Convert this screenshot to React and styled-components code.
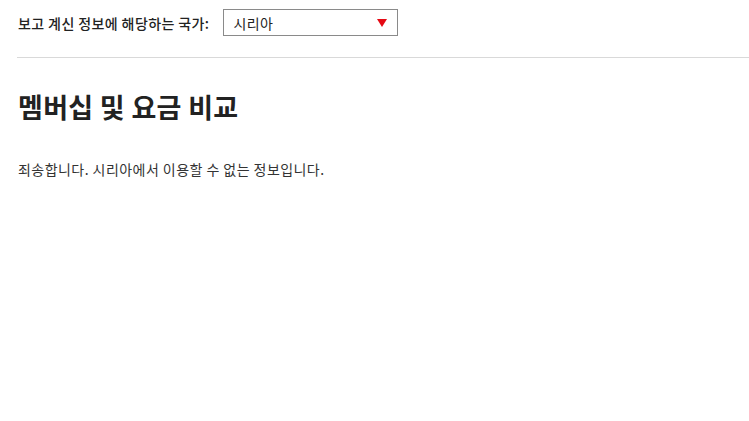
import React from 'react';
import styled, { createGlobalStyle } from 'styled-components';

const GlobalStyle = createGlobalStyle`
  body {
    margin: 0;
    background: #fff;
    font-family: "Noto Sans CJK KR", "Noto Sans", sans-serif;
    color: #222;
  }
`;

const Page = styled.div`
  padding: 9px 0 0 17px;
`;

const CountryBar = styled.div`
  display: flex;
  align-items: center;
  gap: 14px;
  padding-left: 1px;
`;

const Label = styled.label`
  font-size: 14px;
  letter-spacing: 0.4px;
  font-weight: 500;
  color: #222;
`;

const Select = styled.div`
  position: relative;
  width: 164px;
  height: 25px;
  border: 1px solid #8a8a8a;
  display: flex;
  align-items: center;
  padding-left: 9px;
  box-sizing: content-box;
  font-size: 14px;
  letter-spacing: 0.4px;
  color: #222;
`;

const Arrow = styled.span`
  position: absolute;
  right: 10px;
  top: 9px;
  width: 0;
  height: 0;
  border-left: 5px solid transparent;
  border-right: 5px solid transparent;
  border-top: 8px solid #e50914;
`;

const Divider = styled.hr`
  margin: 21px 0 0;
  border: none;
  border-top: 1px solid #d9d9d9;
`;

const Title = styled.h1`
  margin: 29px 0 0 1px;
  font-size: 27px;
  letter-spacing: 0.3px;
  font-weight: 700;
  color: #222;
  line-height: 40px;
`;

const Message = styled.p`
  margin: 32px 0 0 1px;
  font-size: 14px;
  letter-spacing: 0.45px;
  color: #333;
  line-height: 20px;
`;

export default function App() {
  return (
    <>
      <GlobalStyle />
      <Page>
        <CountryBar>
          <Label>보고 계신 정보에 해당하는 국가:</Label>
          <Select>
            시리아
            <Arrow />
          </Select>
        </CountryBar>
        <Divider />
        <Title>멤버십 및 요금 비교</Title>
        <Message>죄송합니다. 시리아에서 이용할 수 없는 정보입니다.</Message>
      </Page>
    </>
  );
}
